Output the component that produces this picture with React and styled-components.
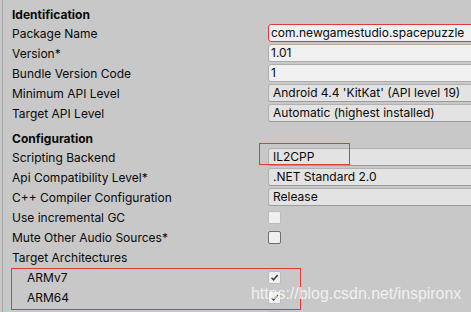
import styled, { createGlobalStyle } from 'styled-components';

const GlobalStyle = createGlobalStyle`
	html, body {
		margin: 0;
		background: #c8c8c8;
		overflow: hidden;
	}
`;

const Panel = styled.div`
	position: relative;
	width: 468px;
	height: 313px;
	margin: -1px 0 0 2px;
	border-left: 1px solid #a6a6a6;
	overflow: hidden;
	font-family: Inter, 'Noto Sans', sans-serif;
	font-size: 12px;
	color: #090909;
`;

const Header = styled.div`
	display: flex;
	align-items: flex-end;
	height: 24px;
	padding-left: 9px;
	line-height: 17px;
	font-weight: 700;
`;

const Row = styled.div`
	display: flex;
	align-items: center;
	height: 20px;
`;

const Label = styled.div`
	box-sizing: border-box;
	flex: none;
	width: 265px;
	padding-left: ${(p) => (p.$indent ? 24 : 9)}px;
	white-space: nowrap;
`;

const TextField = styled.div`
	box-sizing: border-box;
	flex: none;
	width: 220px;
	height: 18px;
	padding-left: 2px;
	line-height: 16px;
	background: #f0f0f0;
	border: 1px solid ${(p) => (p.$highlight ? '#e5383b' : '#acacac')};
	border-radius: 3px;
	white-space: nowrap;
`;

const Dropdown = styled(TextField)`
	padding-left: 4px;
	background: #e3e3e3;
	border-color: #b2b2b2;
	border-bottom-color: #9c9c9c;
`;

const Checkbox = styled.div`
	box-sizing: border-box;
	display: flex;
	align-items: center;
	justify-content: center;
	width: 13px;
	height: 13px;
	background: #f0f0f0;
	border: 1px solid ${(p) => (p.$dark ? '#6e6e6e' : '#bcbcbc')};
	border-radius: 2px;
`;

const Mark = styled.div`
	position: absolute;
	border: 1px solid #e5383b;
	left: ${(p) => p.$x}px;
	top: ${(p) => p.$y}px;
	width: ${(p) => p.$w}px;
	height: ${(p) => p.$h}px;
	pointer-events: none;
`;

const Watermark = styled.div`
	position: absolute;
	left: 248px;
	top: 286px;
	font-family: 'Liberation Sans', Arial, sans-serif;
	font-size: 15.9px;
	line-height: 17px;
	color: rgba(255, 255, 255, 0.75);
	white-space: nowrap;
`;

const Check = ({ checked, dark }) => (
	<Checkbox $dark={dark}>
		{checked && (
			<svg width="9" height="9" viewBox="0 0 9 9">
				<polyline points="1.5,4.8 3.6,6.8 7.6,2" fill="none" stroke="#3c3c3c" strokeWidth="1.5" />
			</svg>
		)}
	</Checkbox>
);

const App = () => {
	return (
		<>
			<GlobalStyle />
			<Panel>
				<Header>Identification</Header>
				<Row>
					<Label>Package Name</Label>
					<TextField $highlight>com.newgamestudio.spacepuzzle</TextField>
				</Row>
				<Row>
					<Label>Version*</Label>
					<TextField>1.01</TextField>
				</Row>
				<Row>
					<Label>Bundle Version Code</Label>
					<TextField>1</TextField>
				</Row>
				<Row>
					<Label>Minimum API Level</Label>
					<Dropdown>Android 4.4 'KitKat' (API level 19)</Dropdown>
				</Row>
				<Row>
					<Label>Target API Level</Label>
					<Dropdown>Automatic (highest installed)</Dropdown>
				</Row>

				<Header>Configuration</Header>
				<Row>
					<Label>Scripting Backend</Label>
					<Dropdown>IL2CPP</Dropdown>
				</Row>
				<Row>
					<Label>Api Compatibility Level*</Label>
					<Dropdown>.NET Standard 2.0</Dropdown>
				</Row>
				<Row>
					<Label>C++ Compiler Configuration</Label>
					<Dropdown>Release</Dropdown>
				</Row>
				<Row>
					<Label>Use incremental GC</Label>
					<Check />
				</Row>
				<Row>
					<Label>Mute Other Audio Sources*</Label>
					<Check dark />
				</Row>
				<Row>
					<Label>Target Architectures</Label>
				</Row>
				<Row>
					<Label $indent>ARMv7</Label>
					<Check checked />
				</Row>
				<Row>
					<Label $indent>ARM64</Label>
					<Check checked />
				</Row>
				<Row>
					<Label $indent />
					<Check />
				</Row>

				<Mark $x={256} $y={144} $w={89} $h={20} />
				<Mark $x={8} $y={269} $w={288} $h={40} />
				<Watermark>https://blog.csdn.net/inspironx</Watermark>
			</Panel>
		</>
	);
};

export default App;
